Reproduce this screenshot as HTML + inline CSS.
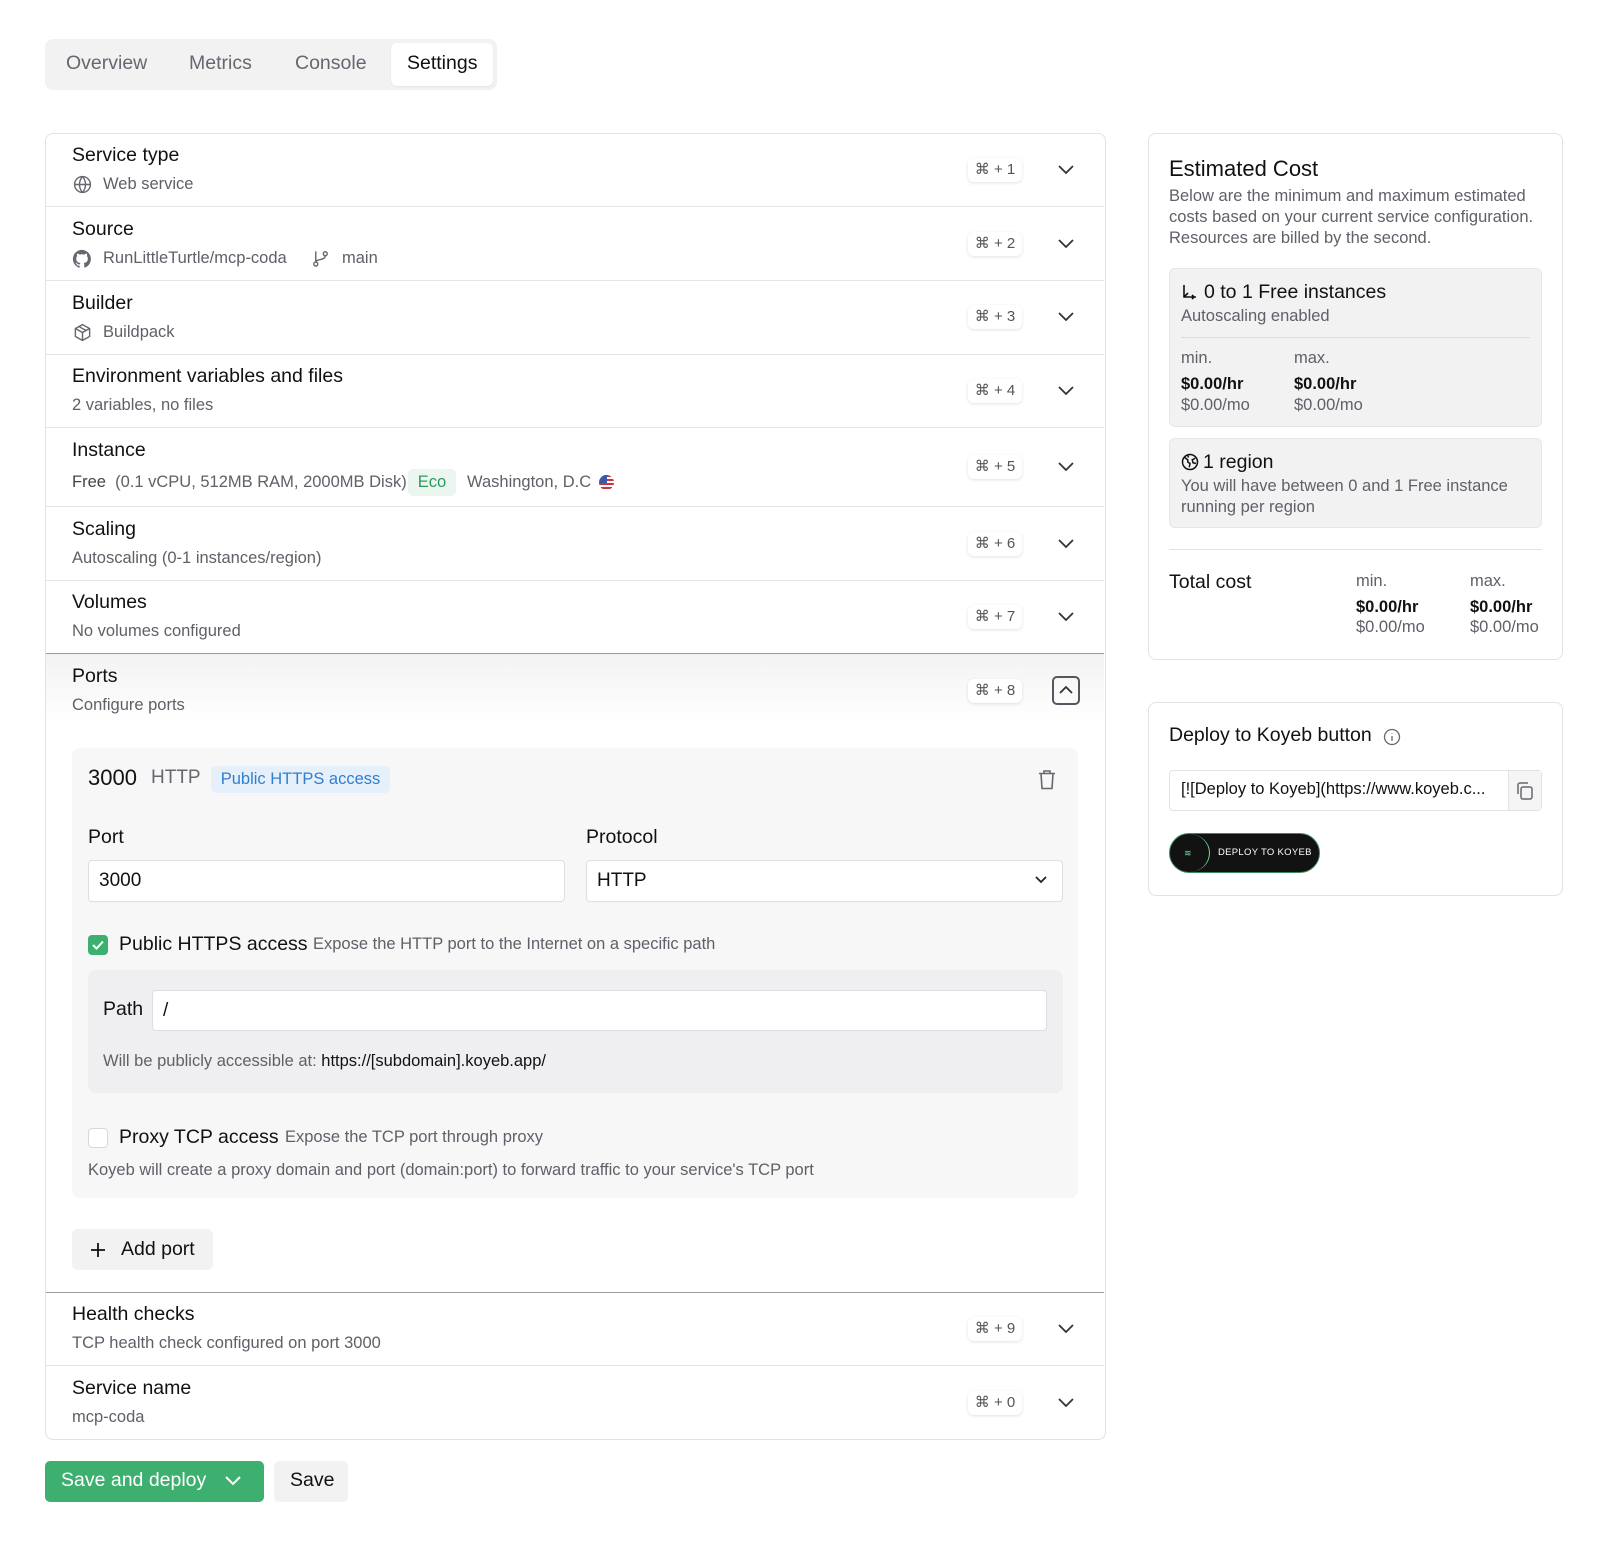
<!DOCTYPE html>
<html><head><meta charset="utf-8"><style>
*{box-sizing:border-box;margin:0;padding:0}
body{width:1608px;height:1560px;background:#fff;font-family:"Liberation Sans",sans-serif;color:#111;position:relative;overflow:hidden}
.a{position:absolute}
.t{font-size:19.5px;color:#111;white-space:nowrap}
.s{font-size:16.5px;color:#5f6068;white-space:nowrap}
.kbd{position:absolute;left:968px;width:54px;height:24px;background:#fff;border-radius:6px;box-shadow:0 1px 3px rgba(0,0,0,.12);font-size:15px;color:#555;text-align:center;line-height:24px}
.chev{position:absolute;left:1057px;width:18px;height:18px}
.line{position:absolute;left:46px;width:1058px;height:1px;background:#e5e5e7}
svg{display:block}
</style></head><body>
<!-- tabs -->
<div class="a" style="left:45px;top:39px;width:452px;height:51px;background:#f2f2f3;border-radius:8px"></div>
<div class="a" style="left:391px;top:43px;width:102px;height:43px;background:#fff;border-radius:6px;box-shadow:0 1px 2px rgba(0,0,0,.06)"></div>
<div class="a t" style="left:66px;top:52px;color:#66676f">Overview</div>
<div class="a t" style="left:189px;top:52px;color:#66676f">Metrics</div>
<div class="a t" style="left:295px;top:52px;color:#66676f">Console</div>
<div class="a t" style="left:407px;top:52px;color:#111">Settings</div>

<!-- main card -->
<div class="a" style="left:45px;top:133px;width:1061px;height:1307px;border:1px solid #e2e2e5;border-radius:8px"></div>
<div class="line" style="top:206px"></div>
<div class="line" style="top:280px"></div>
<div class="line" style="top:354px"></div>
<div class="line" style="top:427px"></div>
<div class="line" style="top:506px"></div>
<div class="line" style="top:580px"></div>
<div class="a" style="left:46px;top:654px;width:1058px;height:70px;background:linear-gradient(#f3f3f4,#fff)"></div>
<div class="a" style="left:46px;top:653px;width:1058px;height:1px;background:#9a9aa2"></div>
<div class="a" style="left:46px;top:1292px;width:1058px;height:1px;background:#9a9aa2"></div>
<div class="line" style="top:1365px"></div>

<div class="a t" style="left:72px;top:144px">Service type</div>
<svg class="a" style="left:73px;top:175px" width="19" height="19" viewBox="0 0 24 24" fill="none" stroke="#66676f" stroke-width="1.8"><circle cx="12" cy="12" r="10"/><path d="M2 12h20M12 2a15 15 0 0 1 0 20M12 2a15 15 0 0 0 0 20"/></svg>
<div class="a s" style="left:103px;top:175px">Web service</div>
<div class="kbd" style="top:158px">⌘ + 1</div>

<div class="a t" style="left:72px;top:218px">Source</div>
<svg class="a" style="left:72px;top:249px" width="20" height="20" viewBox="0 0 24 24"><path fill="#66676f" d="M12 1a11 11 0 0 0-3.5 21.4c.6.1.8-.2.8-.5v-2c-3 .7-3.700-1.300-3.700-1.300-.5-1.300-1.200-1.600-1.200-1.600-1-.7.1-.7.1-.7 1.100.1 1.700 1.100 1.700 1.100 1 1.700 2.600 1.200 3.200.9.1-.7.4-1.200.7-1.500-2.400-.3-5-1.200-5-5.400 0-1.200.4-2.200 1.100-2.900-.1-.3-.5-1.400.1-2.900 0 0 .9-.3 3 1.100a10 10 0 0 1 5.500 0c2.100-1.400 3-1.100 3-1.100.6 1.500.2 2.600.1 2.900.7.8 1.100 1.700 1.100 2.900 0 4.200-2.600 5.100-5 5.400.4.3.7 1 .7 2v3c0 .3.2.6.8.5A11 11 0 0 0 12 1z"/></svg>
<div class="a s" style="left:103px;top:249px">RunLittleTurtle/mcp-coda</div>
<svg class="a" style="left:311px;top:249px" width="19" height="19" viewBox="0 0 24 24" fill="none" stroke="#66676f" stroke-width="1.8"><circle cx="6" cy="19" r="2.5"/><circle cx="18" cy="6" r="2.5"/><path d="M6 3v13.5M18 8.5c0 6-12 4-12 8"/></svg>
<div class="a s" style="left:342px;top:249px">main</div>
<div class="kbd" style="top:232px">⌘ + 2</div>

<div class="a t" style="left:72px;top:292px">Builder</div>
<svg class="a" style="left:73px;top:323px" width="19" height="19" viewBox="0 0 24 24" fill="none" stroke="#66676f" stroke-width="1.8"><path d="M12 2l9 5v10l-9 5-9-5V7z"/><path d="M3 7l9 5 9-5M12 12v10M7.5 4.5l9 5"/></svg>
<div class="a s" style="left:103px;top:323px">Buildpack</div>
<div class="kbd" style="top:305px">⌘ + 3</div>

<div class="a t" style="left:72px;top:365px">Environment variables and files</div>
<div class="a s" style="left:72px;top:396px">2 variables, no files</div>
<div class="kbd" style="top:379px">⌘ + 4</div>

<div class="a t" style="left:72px;top:439px">Instance</div>
<div class="a s" style="left:72px;top:473px;color:#444">Free <span style="color:#5f6068">&nbsp;(0.1 vCPU, 512MB RAM, 2000MB Disk)</span></div>
<div class="a" style="left:408px;top:469px;width:48px;height:27px;background:#eaf6ef;border-radius:5px;color:#2d9a5a;font-size:16.5px;text-align:center;line-height:27px">Eco</div>
<div class="a s" style="left:467px;top:473px">Washington, D.C</div>
<div class="a" style="left:599px;top:475px;width:15px;height:15px;border-radius:50%;background:repeating-linear-gradient(#c9363e 0 2px,#fff 2px 4px);overflow:hidden"><div style="width:8px;height:8px;background:#3b5aa6"></div></div>
<div class="kbd" style="top:455px">⌘ + 5</div>

<div class="a t" style="left:72px;top:518px">Scaling</div>
<div class="a s" style="left:72px;top:549px">Autoscaling (0-1 instances/region)</div>
<div class="kbd" style="top:532px">⌘ + 6</div>

<div class="a t" style="left:72px;top:591px">Volumes</div>
<div class="a s" style="left:72px;top:622px">No volumes configured</div>
<div class="kbd" style="top:605px">⌘ + 7</div>

<div class="a t" style="left:72px;top:665px">Ports</div>
<div class="a s" style="left:72px;top:696px">Configure ports</div>
<div class="kbd" style="top:679px">⌘ + 8</div>
<div class="a" style="left:1052px;top:676px;width:28px;height:29px;border:2px solid #55565e;border-radius:5px"></div>
<svg class="a" style="left:1058px;top:683px" width="16" height="14" viewBox="0 0 16 14" fill="none" stroke="#333" stroke-width="1.8"><path d="M2 10l6-6 6 6"/></svg>

<!-- port box -->
<div class="a" style="left:72px;top:748px;width:1006px;height:450px;background:#f7f7f8;border-radius:8px"></div>
<div class="a" style="left:88px;top:765px;font-size:22px;color:#111">3000</div>
<div class="a" style="left:151px;top:767px;font-size:19px;color:#66676f">HTTP</div>
<div class="a" style="left:211px;top:766px;width:179px;height:27px;background:#e6f0fb;border-radius:5px;color:#2f7fd0;font-size:16.5px;line-height:27px;text-align:center">Public HTTPS access</div>
<svg class="a" style="left:1037px;top:769px" width="20" height="21" viewBox="0 0 20 21" fill="none" stroke="#66676f" stroke-width="1.6"><path d="M2 4.5h16M7 4.5V2h6v2.5M4 4.5l1 15h10l1-15"/></svg>
<div class="a t" style="left:88px;top:826px">Port</div>
<div class="a t" style="left:586px;top:826px">Protocol</div>
<div class="a" style="left:88px;top:860px;width:477px;height:42px;background:#fff;border:1px solid #dedee2;border-radius:4px;font-size:19px;padding:9px 10px">3000</div>
<div class="a" style="left:586px;top:860px;width:477px;height:42px;background:#fff;border:1px solid #dedee2;border-radius:4px;font-size:19px;padding:9px 10px">HTTP</div>
<svg class="a" style="left:1033px;top:874px" width="16" height="12" viewBox="0 0 16 12" fill="none" stroke="#222" stroke-width="1.8"><path d="M3 3l5 5 5-5"/></svg>
<div class="a" style="left:88px;top:935px;width:20px;height:20px;background:#3daf6f;border-radius:4px"></div>
<svg class="a" style="left:91px;top:938px" width="14" height="14" viewBox="0 0 14 14" fill="none" stroke="#fff" stroke-width="2"><path d="M2 7l3.5 3.5L12 3.5"/></svg>
<div class="a t" style="left:119px;top:933px">Public HTTPS access</div>
<div class="a s" style="left:313px;top:935px">Expose the HTTP port to the Internet on a specific path</div>
<div class="a" style="left:88px;top:970px;width:975px;height:123px;background:#efeff1;border-radius:8px"></div>
<div class="a t" style="left:103px;top:998px">Path</div>
<div class="a" style="left:152px;top:990px;width:895px;height:41px;background:#fff;border:1px solid #dedee2;border-radius:4px;font-size:19px;padding:9px 10px">/</div>
<div class="a s" style="left:103px;top:1052px">Will be publicly accessible at: <span style="color:#111">https://[subdomain].koyeb.app/</span></div>
<div class="a" style="left:88px;top:1128px;width:20px;height:20px;background:#fff;border:1px solid #d8d8dc;border-radius:4px"></div>
<div class="a t" style="left:119px;top:1126px">Proxy TCP access</div>
<div class="a s" style="left:285px;top:1128px">Expose the TCP port through proxy</div>
<div class="a s" style="left:88px;top:1161px">Koyeb will create a proxy domain and port (domain:port) to forward traffic to your service's TCP port</div>
<div class="a" style="left:72px;top:1229px;width:141px;height:41px;background:#f2f2f3;border-radius:6px"></div>
<svg class="a" style="left:90px;top:1242px" width="16" height="16" viewBox="0 0 16 16" stroke="#111" stroke-width="1.8"><path d="M8 1v14M1 8h14"/></svg>
<div class="a t" style="left:121px;top:1238px">Add port</div>

<div class="a t" style="left:72px;top:1303px">Health checks</div>
<div class="a s" style="left:72px;top:1334px">TCP health check configured on port 3000</div>
<div class="kbd" style="top:1317px">⌘ + 9</div>
<div class="a t" style="left:72px;top:1377px">Service name</div>
<div class="a s" style="left:72px;top:1408px">mcp-coda</div>
<div class="kbd" style="top:1391px">⌘ + 0</div>

<!-- chevrons -->
<svg class="chev" style="top:161px" viewBox="0 0 18 18" fill="none" stroke="#333" stroke-width="1.8"><path d="M2 5l7 7 7-7"/></svg>
<svg class="chev" style="top:235px" viewBox="0 0 18 18" fill="none" stroke="#333" stroke-width="1.8"><path d="M2 5l7 7 7-7"/></svg>
<svg class="chev" style="top:308px" viewBox="0 0 18 18" fill="none" stroke="#333" stroke-width="1.8"><path d="M2 5l7 7 7-7"/></svg>
<svg class="chev" style="top:382px" viewBox="0 0 18 18" fill="none" stroke="#333" stroke-width="1.8"><path d="M2 5l7 7 7-7"/></svg>
<svg class="chev" style="top:458px" viewBox="0 0 18 18" fill="none" stroke="#333" stroke-width="1.8"><path d="M2 5l7 7 7-7"/></svg>
<svg class="chev" style="top:535px" viewBox="0 0 18 18" fill="none" stroke="#333" stroke-width="1.8"><path d="M2 5l7 7 7-7"/></svg>
<svg class="chev" style="top:608px" viewBox="0 0 18 18" fill="none" stroke="#333" stroke-width="1.8"><path d="M2 5l7 7 7-7"/></svg>
<svg class="chev" style="top:1320px" viewBox="0 0 18 18" fill="none" stroke="#333" stroke-width="1.8"><path d="M2 5l7 7 7-7"/></svg>
<svg class="chev" style="top:1394px" viewBox="0 0 18 18" fill="none" stroke="#333" stroke-width="1.8"><path d="M2 5l7 7 7-7"/></svg>

<!-- buttons -->
<div class="a" style="left:45px;top:1461px;width:219px;height:41px;background:#3daf6f;border-radius:5px"></div>
<div class="a" style="left:61px;top:1469px;font-size:19.5px;color:#fff">Save and deploy</div>
<svg class="a" style="left:223px;top:1474px" width="20" height="14" viewBox="0 0 20 14" fill="none" stroke="#fff" stroke-width="2"><path d="M3 3l7 7 7-7"/></svg>
<div class="a" style="left:274px;top:1461px;width:74px;height:41px;background:#f2f2f3;border-radius:5px"></div>
<div class="a t" style="left:290px;top:1469px">Save</div>

<!-- right card 1 -->
<div class="a" style="left:1148px;top:133px;width:415px;height:527px;border:1px solid #e2e2e5;border-radius:8px"></div>
<div class="a" style="left:1169px;top:156px;font-size:22px">Estimated Cost</div>
<div class="a" style="left:1169px;top:186px;width:380px;font-size:16.5px;color:#5f6068;line-height:21px">Below are the minimum and maximum estimated costs based on your current service configuration. Resources are billed by the second.</div>
<div class="a" style="left:1169px;top:268px;width:373px;height:159px;background:#f2f2f3;border:1px solid #e6e6e8;border-radius:6px"></div>
<svg class="a" style="left:1181px;top:284px" width="17" height="17" viewBox="0 0 17 17" fill="none" stroke="#111" stroke-width="1.6"><path d="M3 1v12h12M3 13l4-4M11 15l2-2-2-2"/></svg>
<div class="a t" style="left:1204px;top:281px">0 to 1 Free instances</div>
<div class="a s" style="left:1181px;top:307px">Autoscaling enabled</div>
<div class="a" style="left:1181px;top:337px;width:349px;height:1px;background:#dcdce0"></div>
<div class="a s" style="left:1181px;top:349px">min.</div>
<div class="a s" style="left:1294px;top:349px">max.</div>
<div class="a" style="left:1181px;top:375px;font-size:16.5px;font-weight:bold">$0.00/hr</div>
<div class="a" style="left:1294px;top:375px;font-size:16.5px;font-weight:bold">$0.00/hr</div>
<div class="a s" style="left:1181px;top:396px">$0.00/mo</div>
<div class="a s" style="left:1294px;top:396px">$0.00/mo</div>
<div class="a" style="left:1169px;top:438px;width:373px;height:90px;background:#f2f2f3;border:1px solid #e6e6e8;border-radius:6px"></div>
<svg class="a" style="left:1181px;top:453px" width="18" height="18" viewBox="0 0 24 24" fill="none" stroke="#111" stroke-width="2"><circle cx="12" cy="12" r="10"/><path d="M5 6l4 3v3l3 2-1 5M19 7l-4 2 1 4 4 1M9 3l1 3"/></svg>
<div class="a t" style="left:1203px;top:451px">1 region</div>
<div class="a" style="left:1181px;top:476px;width:355px;font-size:16.5px;color:#5f6068;line-height:21px">You will have between 0 and 1 Free instance running per region</div>
<div class="a" style="left:1169px;top:549px;width:373px;height:1px;background:#e2e2e5"></div>
<div class="a t" style="left:1169px;top:571px">Total cost</div>
<div class="a s" style="left:1356px;top:572px">min.</div>
<div class="a s" style="left:1470px;top:572px">max.</div>
<div class="a" style="left:1356px;top:598px;font-size:16.5px;font-weight:bold">$0.00/hr</div>
<div class="a" style="left:1470px;top:598px;font-size:16.5px;font-weight:bold">$0.00/hr</div>
<div class="a s" style="left:1356px;top:618px">$0.00/mo</div>
<div class="a s" style="left:1470px;top:618px">$0.00/mo</div>

<!-- right card 2 -->
<div class="a" style="left:1148px;top:702px;width:415px;height:194px;border:1px solid #e2e2e5;border-radius:8px"></div>
<div class="a t" style="left:1169px;top:724px">Deploy to Koyeb button</div>
<svg class="a" style="left:1383px;top:728px" width="18" height="18" viewBox="0 0 18 18" fill="none" stroke="#66676f" stroke-width="1.3"><circle cx="9" cy="9" r="7.5"/><path d="M9 8v5M9 5.3v.4"/></svg>
<div class="a" style="left:1169px;top:770px;width:373px;height:41px;border:1px solid #e2e2e5;border-radius:4px;background:#fff"></div>
<div class="a" style="left:1508px;top:771px;width:33px;height:39px;background:#f5f5f6;border-left:1px solid #e2e2e5"></div>
<svg class="a" style="left:1515px;top:781px" width="20" height="20" viewBox="0 0 20 20" fill="none" stroke="#66676f" stroke-width="1.5"><rect x="6" y="6" width="11" height="12" rx="2"/><path d="M3 13V4a2 2 0 0 1 2-2h8"/></svg>
<div class="a" style="left:1181px;top:780px;font-size:16.5px;color:#111;white-space:nowrap">[![Deploy to Koyeb](https://www.koyeb.c...</div>
<div class="a" style="left:1169px;top:833px;width:151px;height:40px;background:#121212;border-radius:20px;border:1px solid #3b8a5c"></div>
<div class="a" style="left:1170px;top:834px;width:40px;height:38px;border-radius:50%;border-right:1px solid #6fe0a0"></div>
<div class="a" style="left:1184px;top:848px;width:10px;height:10px;color:#6fe0a0;font-size:9px;line-height:10px">≋</div>
<div class="a" style="left:1218px;top:847px;font-size:9.5px;color:#fff;letter-spacing:.3px;white-space:nowrap">DEPLOY TO KOYEB</div>
</body></html>
